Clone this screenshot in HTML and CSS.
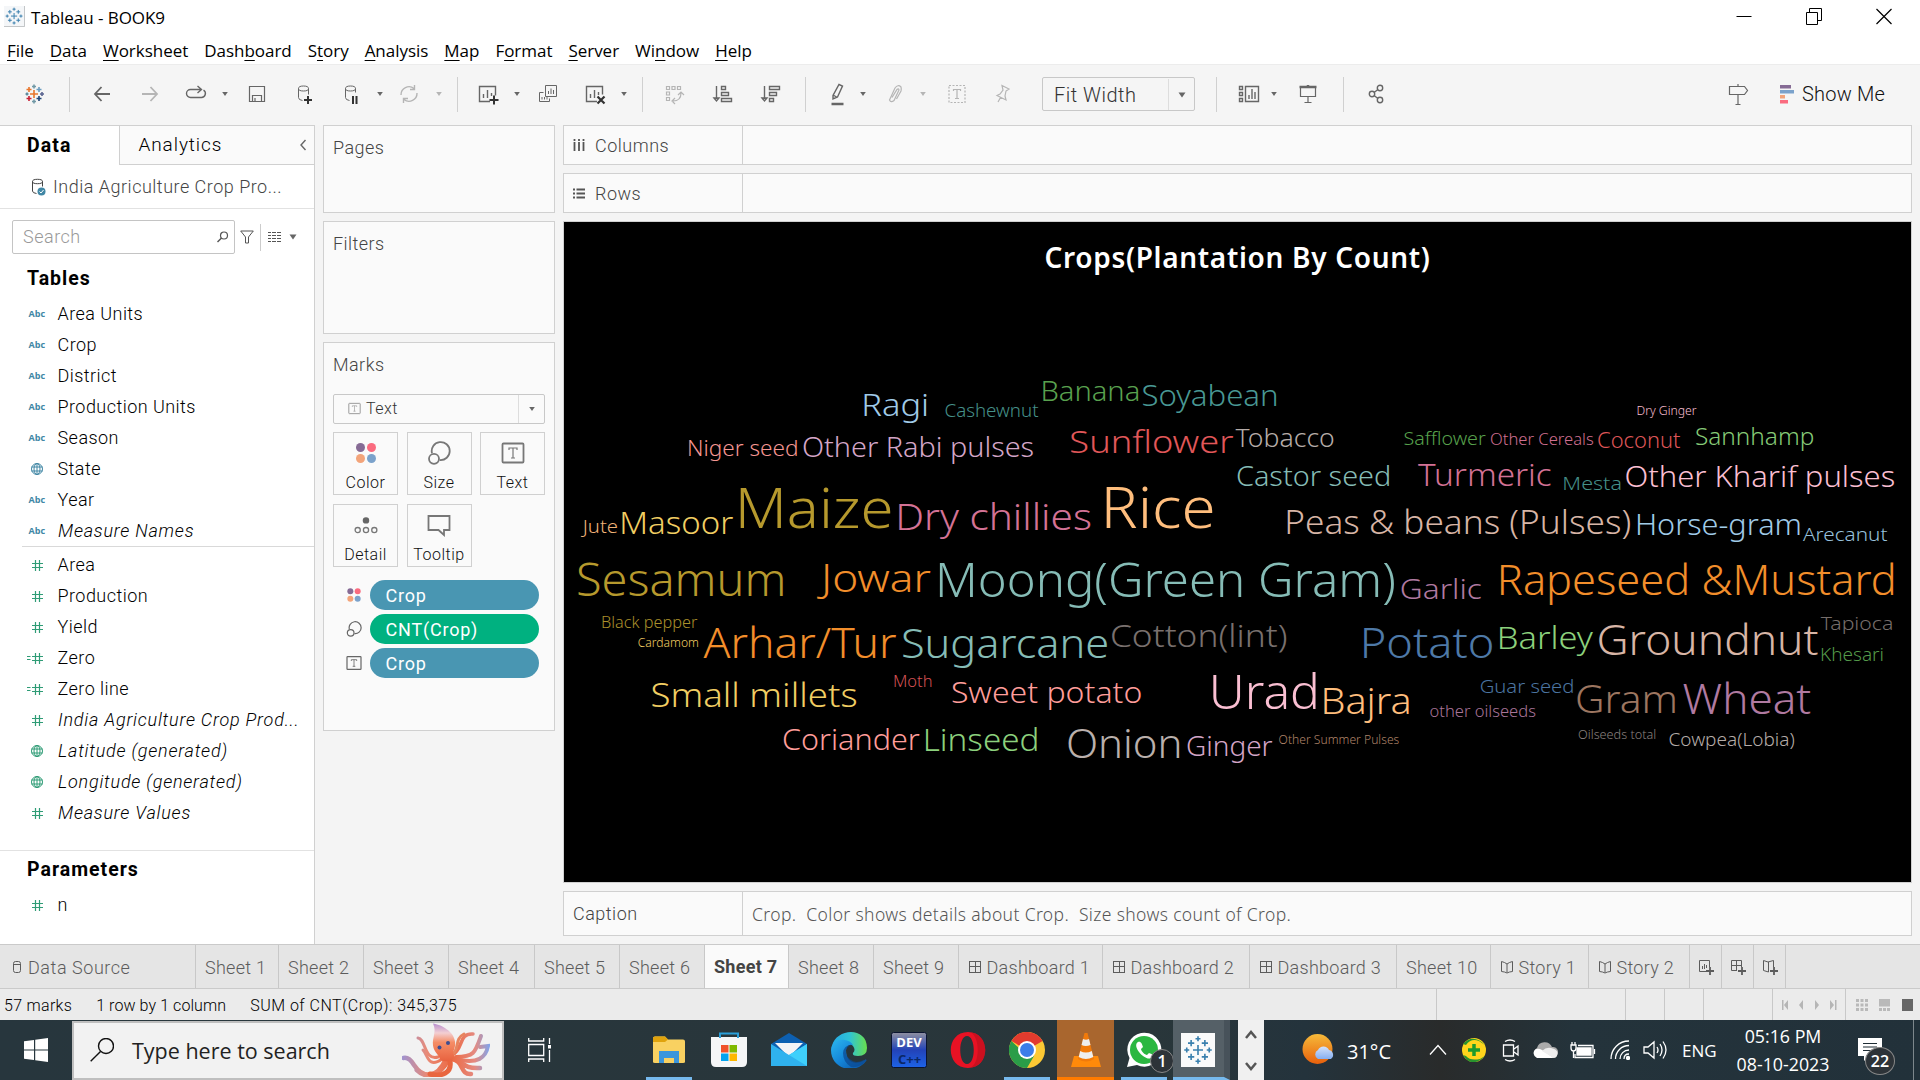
FILE: index.html
```html
<!DOCTYPE html>
<html lang="en">
<head>
<meta charset="utf-8">
<title>Tableau - BOOK9</title>
<link rel="stylesheet" href="styles.css">
</head>
<body>
<svg class="defs" aria-hidden="true">
  <defs>
    <symbol id="caret" viewBox="0 0 8 8"><path d="M1.200 2h5.600L4 6z" fill="currentColor"/></symbol>
    <symbol id="hash" viewBox="0 0 16 16"><path d="M6.500 3v11M10.500 3v11M3 6.500h11M3 10.500h11" class="ln w12"/></symbol>
    <symbol id="calc" viewBox="0 0 20 16"><path d="M10.500 3v11M14.500 3v11M7 6.500h11M7 10.500h11M2 6.500h3.500M2 9.500h3.500" class="ln w12"/></symbol>
    <symbol id="globe" viewBox="0 0 16 16"><path d="M8 2.500v11M2.500 6h11M2.500 10h11" class="ln"/><circle cx="8" cy="8" r="5.500" class="ln"/><ellipse cx="8" cy="8" rx="3" ry="5.500" class="ln"/></symbol>
    <symbol id="tbox" viewBox="0 0 24 24"><rect x="1.500" y="2.500" width="21" height="19" rx="1" class="ln w2"/><path d="M8 9V7h8v2M12 7v10M10 17h4" class="ln w12"/></symbol>
    <symbol id="dots" viewBox="0 0 24 24"><circle cx="6.500" cy="6.500" r="4.500" fill="#866b95"/><circle cx="17.500" cy="6.500" r="4.500" fill="#fa6b7f"/><circle cx="6.500" cy="17.500" r="4.500" fill="#f3a47a"/><circle cx="17.500" cy="17.500" r="4.500" fill="#7ba2cb"/></symbol>
    <symbol id="size" viewBox="0 0 24 24"><path d="M5 12.300A9 9 0 1 1 12.700 19" class="ln w2"/><circle cx="7" cy="17.800" r="5" class="ln w2"/></symbol>
    <symbol id="dash" viewBox="0 0 14 14"><rect x="1.500" y="1.500" width="11" height="11" class="ln"/><path d="M7.500 2v11M2 6.500h11" class="ln"/></symbol>
    <symbol id="story" viewBox="0 0 14 14"><path d="M1.500 1.500 4.500 2.500 7 4l2.500-1.500 3-1v10l-3 .5L7 13l-2.500-1-3-.5zM7 4v8.500" class="ln"/></symbol>
    <symbol id="stars" viewBox="0 0 24 24"><path d="M12 8v8M8 12h8M12 1v4M10 3h4M12 19v4M10 21h4M1 12h4M3 10v4M19 12h4M21 10v4M6.500 4v5M4 6.500h5M17.500 4v5M15 6.500h5M6.500 15v5M4 17.500h5M17.500 15v5M15 17.500h5" stroke="#3a80ae" stroke-width="1.300" fill="none"/></symbol>
    <linearGradient id="edgeA" x1="0" y1="0" x2="1" y2="1"><stop offset="0" stop-color="#2bb5ef"/><stop offset=".5" stop-color="#1485d8"/><stop offset="1" stop-color="#0b4f9e"/></linearGradient>
    <linearGradient id="edgeB" x1="0" y1="0" x2="1" y2="0"><stop offset="0" stop-color="#24a9e6"/><stop offset=".5" stop-color="#2fc3d6"/><stop offset="1" stop-color="#69df4c"/></linearGradient>
    <linearGradient id="devG" x1="0" y1="0" x2="0" y2="1"><stop offset="0" stop-color="#8f90a0"/><stop offset=".5" stop-color="#2343b8"/><stop offset="1" stop-color="#1d63e8"/></linearGradient>
    <linearGradient id="sun" x1="0" y1="0" x2="0" y2="1"><stop offset="0" stop-color="#f6ba3a"/><stop offset="1" stop-color="#e8600c"/></linearGradient>
    <linearGradient id="cloudG" x1="0" y1="0" x2="0" y2="1"><stop offset="0" stop-color="#d5e3fb"/><stop offset="1" stop-color="#86aef0"/></linearGradient>
    <linearGradient id="octo" x1="0" y1="0" x2="0" y2="1"><stop offset="0" stop-color="#b78fd0"/><stop offset=".25" stop-color="#f3cfd2"/><stop offset=".5" stop-color="#f58d66"/><stop offset="1" stop-color="#e8623f"/></linearGradient>
    <linearGradient id="armL" gradientUnits="userSpaceOnUse" x1="0" y1="0" x2="50" y2="0"><stop offset="0" stop-color="#9f93d0"/><stop offset=".5" stop-color="#e98a76"/><stop offset="1" stop-color="#ec6a43"/></linearGradient>
    <linearGradient id="armR" gradientUnits="userSpaceOnUse" x1="50" y1="0" x2="88" y2="0"><stop offset="0" stop-color="#ec6a43"/><stop offset=".6" stop-color="#e58a80"/><stop offset="1" stop-color="#7fa5ee"/></linearGradient>
  </defs>
</svg>

<header class="titlebar">
  <svg class="app-icon" viewBox="0 0 24 24"><rect width="24" height="24" fill="#f4f6f8"/><path d="M23.500 0v23.500H0" stroke="#b9bcbe" fill="none"/><use href="#stars" x="1" y="1" width="21" height="21"/></svg>
  <span class="title">Tableau - BOOK9</span>
  <div class="window-controls">
    <svg viewBox="0 0 16 20"><path d="M.5 10.500h15" class="ln"/></svg>
    <svg viewBox="0 0 16 20"><path d="M.5 6.500h11v12h-11zM3.500 6V2.500h12v12H12" class="ln"/></svg>
    <svg viewBox="0 0 16 20"><path d="m.5 3 15 15M15.500 3l-15 15" class="ln w12"/></svg>
  </div>
</header>

<nav class="menu">
  <span><u>F</u>ile</span><span><u>D</u>ata</span><span><u>W</u>orksheet</span><span>Dash<u>b</u>oard</span><span>S<u>t</u>ory</span><span><u>A</u>nalysis</span><span><u>M</u>ap</span><span>F<u>o</u>rmat</span><span><u>S</u>erver</span><span>Wi<u>n</u>dow</span><span><u>H</u>elp</span>
</nav>

<div class="toolbar">
  <svg class="i" viewBox="0 0 24 24"><g fill="none" stroke-width="1.600"><path d="M12 8v8M8 12h8" stroke="#e8762c"/><path d="M7 5v5M4.500 7.500h5" stroke="#e8762c"/><path d="M17 5v5M14.500 7.500h5" stroke="#6b9dc0"/><path d="M7 14v5M4.500 16.500h5" stroke="#c72035"/><path d="M17 14v5M14.500 16.500h5" stroke="#1f4477"/><path d="M12 2.500v4M10 4.500h4M12 17.500v4M10 19.500h4" stroke="#7199a6"/><path d="M3.500 12h3M5 10.500v3" stroke="#59879b"/><path d="M18 12h4M20 10v4" stroke="#5b6591"/></g></svg>
  <i class="sep"></i>
  <svg class="i" viewBox="0 0 24 24"><path d="M21 12H6M12.500 5 6 12l6.500 7" class="ln w2"/></svg>
  <svg class="i off" viewBox="0 0 24 24"><path d="M4 12h15M12.500 5l6.500 7-6.500 7" class="ln w2"/></svg>
  <svg class="i" viewBox="0 0 24 24"><path d="M13 7.500H6.500a3.500 3.500 0 0 0 0 8h11a4 4 0 0 0 2-7.400M12 7.500h5M13.500 4l4 3.500-4 3.500" class="ln w15"/></svg>
  <svg class="c"><use href="#caret"/></svg>
  <svg class="i" viewBox="0 0 24 24"><path d="M4.500 4.500h15v15h-15zM7.500 19.500v-6h9v6M10 19.500V16" class="ln w12"/></svg>
  <svg class="i" viewBox="0 0 24 24"><path d="M5.500 6.500v9q0 2.500 4 3M15.500 6.500v6" class="ln"/><ellipse cx="10.500" cy="6.500" rx="5" ry="2.500" class="ln"/><path d="M15 14v8M11 18h8" stroke="#333" stroke-width="2"/></svg>
  <svg class="i" viewBox="0 0 24 24"><path d="M6.500 6.500v9q0 2.500 4 3M16.500 6.500v4" class="ln"/><ellipse cx="11.500" cy="6.500" rx="5" ry="2.500" class="ln"/><path d="M14 14v8M17.500 14v8" stroke="#333" stroke-width="2"/></svg>
  <svg class="c"><use href="#caret"/></svg>
  <svg class="i off" viewBox="0 0 24 24"><path d="M4 13A8 8 0 0 1 17 6.500M20 11a8 8 0 0 1-13 6.500M17.500 3v4.500H13M6.500 21v-4.500H11" class="ln w15"/></svg>
  <svg class="c off"><use href="#caret"/></svg>
  <i class="sep"></i>
  <svg class="i" viewBox="0 0 24 24"><path d="M14 19.500H3.500v-15h16v9M7.500 16v-4M11.500 16V8M15.500 14v-3" class="ln w15"/><path d="M18 13.500v9M13.500 18h9" stroke="#333" stroke-width="2"/></svg>
  <svg class="c"><use href="#caret"/></svg>
  <svg class="i" viewBox="0 0 24 24"><path d="M13.500 16.500v3h-10v-9h4M9.500 3.500h11v11h-11zM12.500 12V9M15 12V6.500M17.500 12V8M6 17.500V15M8.500 17.500V15M11 17.500V15" class="ln"/></svg>
  <svg class="i" viewBox="0 0 24 24"><path d="M14 19.500H3.500v-15h16v8M7.500 16v-4M11.500 16V8M15.500 13v-3" class="ln w15"/><path d="m14.500 14.500 7 7M21.500 14.500l-7 7" stroke="#333" stroke-width="2.200"/></svg>
  <svg class="c"><use href="#caret"/></svg>
  <i class="sep"></i>
  <svg class="i off" viewBox="0 0 24 24"><path d="M4.500 4.500h3v3h-3zM10 4.500h3v3h-3zM15.500 4.500h3v3h-3zM4.500 10h3v3h-3zM4.500 15.500h3v3h-3zM11 19q8 0 8-8M13 16l-3 3 3 3M16 13l3-3 3 3" class="ln w12"/></svg>
  <svg class="i" viewBox="0 0 24 24"><path d="M5.500 4v13M3 16l2.500 3L8 16zM10.500 4.500h4v3h-4zM10.500 10.500h7v3h-7zM10.500 16.500h10v3h-10z" class="ln w15"/></svg>
  <svg class="i" viewBox="0 0 24 24"><path d="M5.500 4v13M3 16l2.500 3L8 16zM10.500 4.500h10v3h-10zM10.500 10.500h7v3h-7zM10.500 16.500h4v3h-4z" class="ln w15"/></svg>
  <i class="sep"></i>
  <svg class="i" viewBox="0 0 24 24"><path d="m13 2.500 3.500 1.500-5 11-4.500 2v-3.500zM7 13l4.500 2.500" class="ln w15"/><path d="M5.500 22h12" class="ln w25"/></svg>
  <svg class="c"><use href="#caret"/></svg>
  <svg class="i off" viewBox="0 0 24 24"><path d="m9 15.500 5-8q1.500-1.500 2 .5L11 18.500q-3 2.500-4.500-.5L12 6q3-4 6-1 .5 2 0 4L13.500 17" class="ln w12"/></svg>
  <svg class="c off"><use href="#caret"/></svg>
  <svg class="i off" viewBox="0 0 24 24"><path d="M4 3.500h16v17H4z" class="ln w12 dashed"/><path d="M8.500 9V7.500h7V9M12 7.500v9M10 16.500h4" class="ln w12"/></svg>
  <svg class="i off" viewBox="0 0 24 24"><path d="m11 3.500 7 3.500-3 2-1 5 1 4-9-4.500 3-1.500 3-4zM9.500 15.500 7 20" class="ln w12"/></svg>
  <div class="select fit"><span>Fit Width</span><b><svg class="c big"><use href="#caret"/></svg></b></div>
  <i class="sep"></i>
  <svg class="i" viewBox="0 0 24 24"><path d="M2.500 4.500h3v3h-3zM2.500 10.500h3v3h-3zM2.500 16.500h3v3h-3zM8.500 4.500h13v15h-13zM12 17v-4M15 17V7M18 17v-7" class="ln w15"/></svg>
  <svg class="c"><use href="#caret"/></svg>
  <svg class="i" viewBox="0 0 24 24"><path d="M4.500 6v8.500h15V6M12 15v5M8.500 20.500h7" class="ln w12"/><path d="M3.500 5h17M12 3v2" class="ln w25"/></svg>
  <i class="sep"></i>
  <svg class="i" viewBox="0 0 24 24"><circle cx="8" cy="12" r="2.700" class="ln w15"/><circle cx="16" cy="6" r="2.700" class="ln w15"/><circle cx="16" cy="18" r="2.700" class="ln w15"/><path d="m10 10.500 4-3M10 13.500l4 3" class="ln w15"/></svg>
  <svg class="i" viewBox="0 0 24 24"><path d="M3.500 4.500h15l3 4-3 4h-15zM12 2v2M12 13v9M9.500 22.500h5" class="ln w12"/></svg>
  <div class="showme"><svg viewBox="0 0 14 20"><path fill="#866b95" d="M0 1h11v3.500H0z"/><path fill="#7ba2cb" d="M0 6h14v3.500H0z"/><path fill="#f3a47a" d="M0 11h5v3.500H0z"/><path fill="#fa6b7f" d="M0 16h8v3.500H0z"/></svg><span>Show Me</span></div>
</div>

<main class="workspace">
  <aside class="data-pane">
    <div class="pane-tabs"><b>Data</b><div><span>Analytics</span><svg viewBox="0 0 8 12"><path d="M6.500 1 2 6l4.500 5" class="ln w15"/></svg></div></div>
    <div class="source"><svg viewBox="0 0 16 18"><path d="M1.500 3.500V13q0 2 4 2.500M11.500 3.500v5" class="ln"/><ellipse cx="6.500" cy="3.500" rx="5" ry="2.200" class="ln"/><circle cx="10.500" cy="13.500" r="4" fill="#4187a5"/><path d="m8.500 13.500 1.500 1.500 2.500-3" stroke="#fff" fill="none"/></svg><span>India Agriculture Crop Pro...</span></div>
    <div class="search-row">
      <div class="search"><span>Search</span><svg viewBox="0 0 12 12"><circle cx="7" cy="4.500" r="3.500" class="ln w12"/><path d="m4.500 7-4 4" class="ln w15"/></svg></div>
      <svg class="funnel" viewBox="0 0 14 14"><path d="M.7 1h12.600L8.500 7v6h-3V7z" class="ln"/></svg>
      <i></i>
      <svg class="listview" viewBox="0 0 13 11"><path d="M0 .5h3M4 .5h4M9 .5h4M0 3.500h3M4 3.500h4M9 3.500h4M0 6.500h3M4 6.500h4M9 6.500h4M0 9.500h3M4 9.500h4M9 9.500h4" class="ln w12"/></svg>
      <svg class="c big"><use href="#caret"/></svg>
    </div>
    <h2>Tables</h2>
    <ul class="fields dims">
      <li><em>Abc</em>Area Units</li>
      <li><em>Abc</em>Crop</li>
      <li><em>Abc</em>District</li>
      <li><em>Abc</em>Production Units</li>
      <li><em>Abc</em>Season</li>
      <li><em><svg><use href="#globe"/></svg></em>State</li>
      <li><em>Abc</em>Year</li>
      <li class="gen"><em>Abc</em>Measure Names</li>
    </ul>
    <ul class="fields measures">
      <li><em><svg><use href="#hash"/></svg></em>Area</li>
      <li><em><svg><use href="#hash"/></svg></em>Production</li>
      <li><em><svg><use href="#hash"/></svg></em>Yield</li>
      <li><em><svg class="wide"><use href="#calc"/></svg></em>Zero</li>
      <li><em><svg class="wide"><use href="#calc"/></svg></em>Zero line</li>
      <li class="gen"><em><svg><use href="#hash"/></svg></em>India Agriculture Crop Prod...</li>
      <li class="gen"><em><svg><use href="#globe"/></svg></em>Latitude (generated)</li>
      <li class="gen"><em><svg><use href="#globe"/></svg></em>Longitude (generated)</li>
      <li class="gen"><em><svg><use href="#hash"/></svg></em>Measure Values</li>
    </ul>
    <section class="params">
      <h2>Parameters</h2>
      <ul class="fields"><li><em><svg><use href="#hash"/></svg></em>n</li></ul>
    </section>
  </aside>

  <div class="cards">
    <section class="card pages">Pages</section>
    <section class="card filters">Filters</section>
    <section class="card marks">
      <span>Marks</span>
      <div class="select mark-type"><svg class="t"><use href="#tbox"/></svg><span>Text</span><b><svg class="c"><use href="#caret"/></svg></b></div>
      <div class="buttons">
        <div><svg><use href="#dots"/></svg>Color</div>
        <div><svg><use href="#size"/></svg>Size</div>
        <div><svg><use href="#tbox"/></svg>Text</div>
        <div><svg viewBox="0 0 26 24"><circle cx="13" cy="7" r="3.500" fill="#666"/><circle cx="4" cy="17.500" r="2.800" class="ln w15"/><circle cx="13" cy="17.500" r="2.800" class="ln w15"/><circle cx="22" cy="17.500" r="2.800" class="ln w15"/></svg>Detail</div>
        <div><svg viewBox="0 0 24 24"><path d="M1.500 3h21v14H17v5l-5.500-5h-10z" class="ln w2"/></svg>Tooltip</div>
      </div>
      <div class="pills">
        <div><svg><use href="#dots"/></svg><span>Crop</span></div>
        <div class="green"><svg><use href="#size"/></svg><span>CNT(Crop)</span></div>
        <div><svg><use href="#tbox"/></svg><span>Crop</span></div>
      </div>
    </section>
  </div>

  <div class="view">
    <div class="shelf"><div><svg viewBox="0 0 12 14"><path d="M1.500 0v2M6 0v2M10.500 0v2M1.500 3v9M6 3v9M10.500 3v9" class="ln w2"/></svg>Columns</div></div>
    <div class="shelf"><div><svg viewBox="0 0 12 14"><path d="M0 2.500h2M0 6.500h2M0 10.500h2M3.500 2.500H12M3.500 6.500H12M3.500 10.500H12" class="ln w2"/></svg>Rows</div></div>
    <div class="canvas"><h1>Crops(Plantation By Count)</h1><svg id="cloud" viewBox="564 222 1347 660"></svg></div>
    <div class="shelf caption"><div>Caption</div><p>Crop.&nbsp; Color shows details about Crop.&nbsp; Size shows count of Crop.</p></div>
  </div>
</main>

<nav class="sheets">
  <div><svg viewBox="0 0 10 14"><rect x="1.500" y="1.500" width="7" height="11" rx="2" class="ln"/><path d="M2 4.500h6" class="ln"/></svg>Data Source</div>
  <div>Sheet 1</div><div>Sheet 2</div><div>Sheet 3</div><div>Sheet 4</div><div>Sheet 5</div><div>Sheet 6</div>
  <div class="active">Sheet 7</div><div>Sheet 8</div><div>Sheet 9</div>
  <div><svg><use href="#dash"/></svg>Dashboard 1</div><div><svg><use href="#dash"/></svg>Dashboard 2</div><div><svg><use href="#dash"/></svg>Dashboard 3</div>
  <div>Sheet 10</div>
  <div><svg><use href="#story"/></svg>Story 1</div><div><svg><use href="#story"/></svg>Story 2</div>
  <div class="new"><svg viewBox="0 0 16 16"><path d="M9 12.500H1.500v-11h10V8M4.500 10V7M6.500 10V5M8.500 9V6" class="ln"/><path d="M12 8v8M8 12h8" class="ln w2"/></svg></div>
  <div class="new"><svg viewBox="0 0 16 16"><path d="M7 11.500H1.500v-10h10V8M6.500 2v9M2 6.500h9" class="ln"/><path d="M12 8v8M8 12h8" class="ln w2"/></svg></div>
  <div class="new"><svg viewBox="0 0 16 16"><path d="M1.500 1.500 6 3l5.500-1.500V8M1.500 1.500v10L6.500 13V3" class="ln"/><path d="M12 8v8M8 12h8" class="ln w2"/></svg></div>
</nav>

<div class="status">
  <span>57 marks</span><span class="dims-count">1 row by 1 column</span><span class="sum">SUM of CNT(Crop): 345,375</span>
  <div class="cells"><i></i><i></i><i></i><i></i>
    <i><svg viewBox="0 0 56 12"><path fill="#b5b5b5" d="M0 1h1.500v10H0zM6 1v10L2 6zM21 1v10l-4-5zM33 1v10l4-5zM48 1v10l4-5zM53 1h1.500v10H53z"/></svg></i>
    <i><svg viewBox="0 0 58 12"><path fill="#b9b9b9" d="M0 0h3v3H0zM4.500 0h3v3h-3zM9 0h3v3H9zM0 4.500h3v3H0zM4.500 4.500h3v3h-3zM9 4.500h3v3H9zM0 9h3v3H0zM4.500 9h3v3h-3zM9 9h3v3H9zM23 0h11v7.500H23zM23 9h3v3h-3zM27 9h3v3h-3zM31 9h3v3h-3z"/><path fill="#666" d="M46 0h11v12H46z"/></svg></i></div>
</div>

<footer class="taskbar">
  <div class="start"><svg viewBox="0 0 24 24"><path fill="#fff" d="M0 3.300 10 2v9.500H0zM11.200 1.800 24 0v11.500H11.200zM0 12.500h10V22L0 20.700zM11.200 12.500H24V24l-12.800-1.800z"/></svg></div>
  <div class="find"><svg class="lens" viewBox="0 0 24 24"><circle cx="16" cy="8" r="7.500" class="ln w15"/><path d="M10.500 13.500.7 23.300" class="ln w15"/></svg><span>Type here to search</span>
    <svg class="octopus" viewBox="0 0 88 54"><g fill="none" stroke-linecap="round">
      <g stroke="url(#armL)"><path d="M36 34C22 38 24 16 16 15" stroke-width="3"/><path d="M40 36C26 46 26 32 21 27" stroke-width="3"/><path d="M44 36C34 58 20 54 12 42 9 37 6 34 1.500 35" stroke-width="4.500"/><path d="M46 37C38 53 24 56 15 47" stroke-width="5"/></g>
      <g stroke="url(#armR)"><path d="M50 32C62 26 56 10 71 11" stroke-width="3.500"/><path d="M54 34C72 34 73 30 79 13" stroke-width="4"/><path d="M54 36C76 42 84 34 86 23L78 24" stroke-width="4"/><path d="M50 36C62 38 58 52 69 51M50 35C62 38 60 46 78 45" stroke-width="4.500"/></g>
      <path d="M50 32C58 26 52 16 62 11" stroke="#e7855f" stroke-width="3"/><path d="M48 38C50 50 40 54 28 51" stroke="#e9663f" stroke-width="5"/></g>
      <path d="M31 .5c8 1 21 8 22 18 1 7-3 9-1 14 1 5-9 8-14 4-1-5-6-7-7-14-1-8 4-14 0-22z" fill="url(#octo)"/><circle cx="37.500" cy="24.500" r="2" fill="#3e4d91"/><circle cx="46" cy="20" r="2" fill="#3e4d91"/></svg>
  </div>
  <svg class="taskview" viewBox="0 0 24 24"><path d="M.7 0v3h15V0M.7 24v-3h15v3M.7 6.500h15v11H.7zM21.500 0v6M21.500 12v12" stroke="#fff" stroke-width="1.300" fill="none"/><path d="M20 7h3v3.500h-3z" fill="#fff"/></svg>
  <div class="apps">
    <div class="run"><svg viewBox="0 0 36 36"><path d="M2 6q0-1.500 2-1.500h10l3 3h15q2 0 2 2V30q0 1-2 1H4q-2 0-2-1z" fill="#f9d161"/><path d="M2 6q0-1.500 2-1.500h10l3 3-3 2.500H2z" fill="#e0a30d"/><path d="M8 19h20v12h-5v-5H13v5H8z" fill="#3b96dc"/></svg></div>
    <div><svg viewBox="0 0 36 36"><path d="M0 5h36v25q0 5-5 5H5q-5 0-5-5z" fill="#f5f6f7"/><path d="M9 6V1.500h18V6" stroke="#2b9fd9" stroke-width="2" fill="none"/><path fill="#f0522a" d="M10 13h7.500v7.500H10z"/><path fill="#7fb900" d="M18.500 13H26v7.500h-7.500z"/><path fill="#03a3ee" d="M10 21.500h7.500V29H10z"/><path fill="#feb800" d="M18.500 21.500H26V29h-7.500z"/></svg></div>
    <div><svg viewBox="0 0 36 36"><path d="m0 12 18-11 18 11v22H0z" fill="#0d60b1"/><path d="M4 11h28L18 25z" fill="#f4f4f6"/><path d="m0 12 18 11L36 12v22H0z" fill="#2fb2ee"/><path d="m18 23 18-11v22z" fill="#3fd0fb"/></svg></div>
    <div><svg viewBox="0 0 36 36"><path d="M1 14C5-4 36-6 36 16q0 8-9 8-6 0-5-3 3-3 0-7-8-8-21 0z" fill="url(#edgeB)"/><path d="M0 18C0 10 8 7 14 8q6 1 8 5-6-1-7 5 0 12 10 13 5 0 9-3c1-1 2 0 1 1-10 14-35 9-35-11z" fill="url(#edgeA)"/><path d="M22 13q-9-1-10 8 0 9 8 14 9 1 15-6 0-2-2-1-8 4-13 0-6-4-5-10 2-5 7-5z" fill="#0b4b94" opacity=".75"/></svg></div>
    <div><svg viewBox="0 0 36 36"><rect x=".5" y=".5" width="35" height="35" rx="2" fill="url(#devG)" stroke="#0a1430"/><text x="18" y="15" class="dev">DEV</text><text x="18.500" y="32" class="cpp">C++</text></svg></div>
    <div><svg viewBox="0 0 36 36"><path fill-rule="evenodd" fill="#e81224" d="M18 0c23 0 23 36 0 36S-5 0 18 0zm-1 4c-9 0-9 28 0 28s9-28 0-28z"/><path d="M21 .5c19 3 19 32 0 35 9-5 9-30 0-35z" fill="#b80f1d" opacity=".6"/></svg></div>
    <div class="run"><svg viewBox="0 0 36 36"><circle cx="18" cy="18" r="18" fill="#fcc934"/><path d="M18 18 2.400 9A18 18 0 0 1 33.600 9z" fill="#e23b2e"/><path d="M18 18h-6L2.400 9A18 18 0 0 0 18 36l7-12z" fill="#2a9d48"/><circle cx="18" cy="18" r="9" fill="#fff"/><circle cx="18" cy="18" r="7" fill="#3b7de9"/></svg></div>
    <div class="run vlc"><svg viewBox="0 0 36 36"><path d="M6 24h24l3 11H3z" fill="#ff8a0a"/><path d="m16.500 1 3 0L26 27q-8 5-16 0z" fill="#f17a0a"/><path d="m15 7-1.500 6q4 2 9 0L21 7q-3 1.500-6 0zM12.200 19l-1.500 6q7 4 14.600 0l-1.500-6q-6 3-11.600 0z" fill="#eee"/></svg></div>
    <div class="run"><svg viewBox="0 0 36 36"><path d="M1 35 3.500 26A17 17 0 1 1 11 33z" fill="#fff"/><circle cx="18" cy="18" r="14" fill="#2bb741"/><path d="M12 10c-3 2-2 6 1 10s9 8 12 6c3-3 1-4-2-5l-2 2c-2 0-6-4-6-6l2-2c-1-3-2-6-5-5z" fill="#fff"/></svg><span class="badge">1</span></div>
    <div class="run tab"><svg viewBox="0 0 36 36"><path d="M1 1h34v34H1z" fill="#fafafa"/><use href="#stars" x="3" y="3" width="30" height="30"/></svg></div>
  </div>
  <div class="scroll"><svg viewBox="0 0 26 60"><path d="m8 18 5-6 5 6M8 43l5 6 5-6" class="ln w25"/></svg></div>
  <div class="tray">
    <svg class="weather" viewBox="0 0 34 32"><circle cx="15.500" cy="15" r="15" fill="url(#sun)"/><path d="M16 25a5 5 0 0 1 0-9 6 6 0 0 1 11 0 5 5 0 0 1 2 9z" fill="url(#cloudG)"/></svg>
    <span class="temp">31°C</span>
    <svg class="up" viewBox="0 0 18 12"><path d="m1 10.500 8-9 8 9"/></svg>
    <svg class="plus" viewBox="0 0 24 24"><circle cx="12" cy="12" r="12" fill="#ffd51c"/><path d="M1 6q10-11 22 1L17 3Q9 0 4 7zM1 17q9 14 22 1l-5 3Q8 23 4 18z" fill="#27932e"/><path d="M12 6v12M6 12h12" stroke="#1d9a2d" stroke-width="3.500"/></svg>
    <svg class="cam" viewBox="0 0 18 24"><path d="M1.500 7h10v11h-10zM12 11l4-3v9l-4-3M3 3.500q5-3 10 0M3 21.500q5 3 10 0"/></svg>
    <svg class="cloud" viewBox="0 0 26 18"><path d="M5 16A5 5 0 0 1 5 7a8 8 0 0 1 15-1 5 5 0 0 1 2 10z" fill="#aaa"/><path d="M5 17a5 5 0 0 1-1-9q3-1 6 1l12 8z" fill="#fff"/><path d="M10 10q4-4 9-3 6 1 6.500 5 0 5-4 5z" fill="#eee"/></svg>
    <svg class="bat" viewBox="0 0 26 18"><path d="M8 4.500h15v12H5V13"/><path d="M7 7h14v7H7z" fill="#fff"/><path d="M24.500 8v5M3.500 10v7M1 4v3q0 3 2.500 3T6 7V4zM2 4V1M5 4V1"/></svg>
    <svg class="wifi" viewBox="0 0 20 20"><path d="M1 19C1 9 9 1 19 1M5.500 19C5.500 11.500 11.500 5.500 19 5.500M10 19c0-5 4-9 9-9M14 19q0-5 5-5"/><circle cx="18" cy="18" r="1.500" fill="#fff"/></svg>
    <svg class="vol" viewBox="0 0 24 20"><path d="M1 7h4l6-5v16l-6-5H1zM14 7q2 3 0 6M17 4q4 6 0 12M20 1.500q6 8.500 0 17"/></svg>
    <span class="lang">ENG</span>
    <div class="clock"><span>05:16 PM</span><span>08-10-2023</span></div>
    <div class="note"><svg viewBox="0 0 24 24"><path d="M0 0h24v18H11l-5 5v-5H0z" fill="#fff"/><path d="M5 5.500h14M5 9h14M5 12.500h9" stroke="#1f2d35"/></svg><span class="badge big">22</span></div>
    <i class="edge"></i>
  </div>
</footer>
<script src="cloud.js"></script>
</body>
</html>
```

FILE: styles.css
```css
* { box-sizing: border-box; }
body {
  margin: 0; width: 1920px; height: 1080px; overflow: hidden;
  display: grid; grid-template-rows: 32px 32px 61px 819px 45px 31px 60px;
  background: #f4f4f4; color: #222;
  font: 300 18px/1.2 Roboto, sans-serif; letter-spacing: .35px;
}
.defs { position: absolute; width: 0; height: 0; }
.ln { fill: none; stroke: currentColor; stroke-width: 1; }
.w12 { stroke-width: 1.200; }
.w15 { stroke-width: 1.400; }
.w2 { stroke-width: 1.800; }
.w25 { stroke-width: 2.500; }
.dashed { stroke-dasharray: 2 1.500; }
svg { display: block; flex: none; }
h1, h2, ul, p { margin: 0; padding: 0; }

.titlebar, .menu { background: #fff; color: #000; font: 400 17px/1 "Open Sans", sans-serif; letter-spacing: 0; display: flex; align-items: center; }
.titlebar { padding-left: 4px; gap: 6px; }
.app-icon { width: 21px; height: 21px; }
.titlebar .title { padding-top: 3px; font-size: 17px; letter-spacing: -.05px; }
.window-controls { margin-left: auto; display: flex; gap: 54px; padding-right: 28.500px; }
.window-controls svg { width: 16px; height: 20px; }
.menu { padding: 4px 0 0 7px; gap: 16px; letter-spacing: -.03px; }
.menu u { text-underline-offset: 3px; text-decoration-thickness: 1px; }

.toolbar {
  border-top: 1px solid #ececec; background: #f5f5f5; color: #666; padding: 0 0 2px 22px;
  display: grid; align-items: center; justify-items: start;
  grid-template-columns: 47px 20px 49px 46px 37px 24px 48px 46px 37px 21px 38px 22px 19px 37px 23px 47px 37px 22px 20px 49px 48px 46px 21px 33px 24px 36px 26px 46px 51px 174px 21px 33px 26px 47px 21px 362px 54px 1fr;
}
.toolbar .i { width: 24px; height: 24px; }
.c { width: 8px; height: 8px; color: #666; }
.c.big { width: 10px; height: 10px; }
.toolbar .off { color: #b5b5b5; }
.sep { width: 1px; height: 35px; background: #d0d0d0; }
.select { border: 1px solid #c8c8c8; border-radius: 2px; display: flex; align-items: center; color: #333; }
.select b { margin-left: auto; align-self: stretch; border-left: 1px solid #ddd; display: grid; place-items: center; }
.fit { width: 153px; height: 34px; padding: 1px 0 0 11px; font-size: 20px; letter-spacing: .5px; }
.fit b { width: 26px; }
.showme { display: flex; gap: 8px; align-items: center; font-size: 20px; color: #111; letter-spacing: .2px; }
.showme svg { width: 14px; height: 20px; }

.workspace { display: grid; grid-template-columns: 315px 232px 1349px; column-gap: 8px; }
.data-pane { background: #fff; border: solid #d0d0d0; border-width: 1px 1px 0 0; color: #000; display: flex; flex-direction: column; }
.pane-tabs { height: 39px; display: flex; font-size: 19px; flex: none; }
.pane-tabs b { width: 119px; padding: 8px 0 0 27px; font-weight: 700; font-size: 19.500px; letter-spacing: 1.100px; }
.pane-tabs div { flex: 1; background: #fafafa; border: solid #d0d0d0; border-width: 0 0 1px 1px; display: flex; justify-content: space-between; padding: 8px 7px 0 18.500px; letter-spacing: .9px; }
.pane-tabs svg { width: 8px; height: 12px; margin-top: 5px; color: #666; }
.source { height: 44px; flex: none; border-bottom: 1px solid #e2e2e2; display: flex; align-items: center; gap: 6px; padding-left: 31px; color: #444; font-size: 18px; letter-spacing: .5px; }
.source svg { width: 16px; height: 18px; }
.search-row { display: flex; align-items: center; margin-top: 11px; padding-left: 12px; color: #555; flex: none; }
.search { width: 223px; height: 34px; border: 1px solid #c4c4c4; border-radius: 2px; display: flex; align-items: center; justify-content: space-between; padding: 0 5px 0 10px; color: #999; letter-spacing: .5px; }
.search svg { width: 12px; height: 12px; color: #555; }
.funnel { width: 14px; height: 14px; margin-left: 5px; }
.search-row i { width: 1px; height: 27px; background: #ccc; margin: 0 7px 0 6px; }
.listview { width: 13px; height: 11px; margin-right: 7px; }
h2 { font-size: 19.500px; line-height: 22px; font-weight: 700; letter-spacing: 1px; padding-left: 27px; }
.search-row + h2 { margin: 14px 0 8px; }
.fields { list-style: none; }
.fields li { height: 31px; display: flex; align-items: center; letter-spacing: .45px; }
.fields em { width: 57.500px; flex: none; padding-left: 28.500px; font: 700 9px/1 "Open Sans", sans-serif; letter-spacing: 0; color: #4187a5; }
.fields em svg { width: 16px; height: 16px; }
.fields em svg.wide { width: 20px; margin-left: -4px; }
.fields .gen { font-style: italic; letter-spacing: .78px; }
.fields .gen em { width: 58px; font-style: normal; }
.measures em, .params em { color: #2f9c76; }
.measures { padding-top: 2px; }
.dims { border-bottom: 1px solid #d9d9d9; margin-left: 22px; }
.dims li { margin-left: -22px; }
.params { margin-top: 22px; border-top: 1px solid #e2e2e2; padding-top: 8px; }
.params .fields { margin-top: 8px; }

.cards { display: flex; flex-direction: column; gap: 8px; }
.card { background: #fafafa; border: 1px solid #d0d0d0; padding: 11px 9px; color: #444; font-size: 18px; letter-spacing: .45px; }
.pages { height: 88px; } .filters { height: 113px; } .marks { height: 389px; }
.mark-type { height: 30px; margin-top: 18px; font-size: 16px; padding-left: 14px; gap: 5px; }
.mark-type b { width: 26px; }
.mark-type .t { width: 13px; height: 13px; color: #999; }
.buttons { display: grid; grid-template-columns: 65px 65px 65px; gap: 9px 8.500px; margin-top: 8px; font-size: 16px; color: #111; }
.buttons div { height: 63px; border: 1px solid #d0d0d0; display: flex; flex-direction: column; align-items: center; justify-content: space-between; padding: 8px 0 1px; letter-spacing: .5px; }
.buttons svg { width: 24px; height: 24px; color: #777; }
.pills { margin-top: 13px; display: flex; flex-direction: column; gap: 4px; }
.pills div { height: 30px; display: flex; align-items: center; padding-left: 13px; gap: 8px; color: #666; }
.pills svg { width: 16px; height: 16px; }
.pills span { width: 169px; height: 30px; border-radius: 15px; background: #4996b2; color: #fff; padding: 5px 0 0 15.500px; font-weight: 400; letter-spacing: .8px; }
.pills .green span { background: #00b180; }

.view { display: grid; grid-template-rows: 40px 40px 662px 45px; row-gap: 8px; }
.shelf { background: #fafafa; border: 1px solid #d0d0d0; display: flex; align-items: center; color: #444; }
.shelf div { width: 179px; align-self: stretch; border-right: 1px solid #d0d0d0; display: flex; align-items: center; gap: 10px; padding: 1px 0 0 9px; letter-spacing: .5px; }
.shelf svg { width: 12px; height: 14px; color: #555; }
.shelf p { padding: 1px 0 0 9px; font: 300 17.500px/1.2 "Noto Sans", sans-serif; letter-spacing: .37px; color: #555; }
.canvas { background: #000; border: 1px solid #d0d0d0; position: relative; }
.canvas h1 { color: #fff; font: 600 28px/38px "Noto Sans", sans-serif; letter-spacing: .68px; text-align: center; padding-top: 16px; }
#cloud { position: absolute; left: 0; top: 0; width: 1347px; height: 660px; font-family: "Noto Sans", sans-serif; font-weight: 300; letter-spacing: 0; }

.sheets { background: #e5e5e5; border: solid #cacaca; border-width: 1px 0; color: #5c5c5c; display: grid; grid-template-columns: 196px 83px 85px 85px 86px 85px 85px 84px 85px 85px 144px 147px 147px 94px 98px 101px 32px 32px 32px; letter-spacing: .28px; }
.sheets div { border-right: 1px solid #c8c8c8; display: flex; align-items: center; padding: 2px 0 0 9px; gap: 4.500px; white-space: nowrap; }
.sheets div:first-child { padding-left: 12px; gap: 6px; letter-spacing: .55px; }
.sheets svg { width: 14px; height: 14px; margin-top: -1px; }
.sheets div:first-child svg { width: 10px; }
.sheets .active { background: #fafafa; color: #444; font-weight: 700; padding-top: 1px; }
.sheets .new { padding-left: 8px; }
.sheets .new svg { width: 16px; height: 16px; }

.status { background: #ebebeb; color: #000; font-size: 16px; display: flex; align-items: center; padding: 0 0 0 4px; gap: 24px; white-space: nowrap; letter-spacing: .3px; }
.status span { padding-top: 2px; }
.status .dims-count { letter-spacing: .08px; }
.status .sum { letter-spacing: .5px; }
.cells { margin-left: auto; align-self: stretch; display: grid; grid-template-columns: 189px 39px 39px 69px 73px 75px; }
.cells i { border-left: 1px solid #c8c8c8; display: flex; align-items: center; padding-left: 9px; }
.cells i:last-child { padding-left: 10px; }
.cells i:last-child svg { width: 58px; height: 12px; }
.cells svg { width: 56px; height: 12px; }

.taskbar { color: #fff; display: flex; align-items: center; font: 400 17.800px/1 "Open Sans", sans-serif; letter-spacing: 0; background: linear-gradient(90deg, #27363d, #29363a 60%, #24333c 68%, #292b2b 75%, #24333b 82%, #22313a); }
.start { width: 72px; display: grid; place-items: center; }
.start svg { width: 24px; height: 24px; }
.find { width: 432px; height: 59px; background: #f2f2f2; border: 2px solid #bfbfbf; color: #222; display: flex; align-items: center; padding: 0 12px 0 16px; font-size: 21.500px; }
.find span { padding-top: 2px; }
.lens { width: 24px; height: 24px; margin-right: 18px; color: #111; }
.octopus { width: 88px; height: 54px; margin-left: auto; }
.taskview { width: 24px; height: 24px; margin: 0 85px 0 24px; }
.apps { display: grid; grid-template-columns: 60px 60px 60px 60px 59px 59px 59px 59px 58px 56px; align-self: stretch; margin-left: 2px; }
.apps div { position: relative; display: grid; place-items: center; justify-self: center; width: 46px; height: 60px; }
.apps svg { width: 36px; height: 36px; }
.apps .run { border-bottom: 3px solid #76b9ed; padding-top: 3px; }
.apps .vlc { background: #a9662e; width: 57px; border-color: #ff7b00; }
.apps .tab { background: #556067; border-right: 6px solid #47525a; width: 57px; }
.dev { font: 700 13px "Open Sans", sans-serif; fill: #fff; text-anchor: middle; }
.cpp { font: 700 13px "Open Sans", sans-serif; fill: #0b2766; text-anchor: middle; }
.badge { position: absolute; right: -7px; top: 29px; width: 24px; height: 24px; border: 1px solid #888; border-radius: 50%; background: #2d3338; color: #fff; display: grid; place-items: center; font-size: 16px; font-weight: 600; }
.scroll { width: 26px; height: 60px; background: #f0f0f0; color: #555; margin-left: 9px; }
.scroll svg { width: 26px; height: 60px; }
.tray { flex: 1; display: flex; align-items: center; padding-left: 38px; }
.up, .cam, .bat, .wifi, .vol { fill: none; stroke: #fff; stroke-width: 1.300; }
.weather { width: 34px; height: 32px; }
.temp { font-size: 20px; margin: 4px 0 0 11px; width: 82px; }
.up { width: 18px; height: 12px; }
.plus { width: 24px; height: 24px; margin-left: 15px; }
.cam { width: 18px; height: 24px; margin-left: 16px; }
.cloud { width: 26px; height: 18px; margin-left: 12px; }
.bat { width: 26px; height: 18px; margin-left: 12px; }
.wifi { width: 20px; height: 20px; margin-left: 14px; }
.vol { width: 24px; height: 20px; margin-left: 13px; }
.lang { margin: 1px 0 0 15px; width: 36px; font-size: 17px; }
.clock { width: 130px; display: flex; flex-direction: column; align-items: center; gap: 10px; margin-top: 1px; }
.note { position: relative; margin-left: 10px; }
.note svg { width: 24px; height: 24px; }
.badge.big { width: 30px; height: 28px; right: -13px; top: 9px; }
.edge { width: 1px; height: 60px; background: #7d878c; margin: 0 6px 0 auto; }
```

FILE: cloud.js
```js
// [label, left edge, right edge, baseline, font size, colour]
const words = [
  ["Ragi", 864.5, 926.5, 416, 32, "#a0cbe8"],
  ["Cashewnut", 945.5, 1038.5, 417, 18, "#459089"],
  ["Banana", 1042.5, 1138.500, 401, 27.5, "#59a14f"],
  ["Soyabean", 1142.5, 1276.500, 406, 28.5, "#499894"],
  ["Dry Ginger", 1637.5, 1697, 415, 12, "#fabfd2"],
  ["Niger seed", 689, 797.5, 456.3, 22, "#f59692"],
  ["Other Rabi pulses", 803, 1033.5, 457, 27, "#d4a6c8"],
  ["Sunflower", 1070.500, 1234, 453, 32, "#e15759"],
  ["Tobacco", 1235.5, 1334, 447.3, 25, "#b5aca8"],
  ["Safflower", 1404.500, 1486.5, 445.3, 18.5, "#57a04c"],
  ["Other Cereals", 1491, 1593, 445.3, 16.5, "#d06f91"],
  ["Coconut", 1598, 1680, 447.5, 22, "#dd5557"],
  ["Sannhamp", 1696, 1813.5, 445.3, 23, "#86ca77"],
  ["Castor seed", 1237, 1389, 486, 27, "#86bcb6"],
  ["Turmeric", 1418, 1551.5, 486, 32, "#d37295"],
  ["Mesta", 1563.5, 1620.7, 490, 19, "#459089"],
  ["Other Kharif pulses", 1625.500, 1895, 487, 28.5, "#fabfd2"],
  ["Jute", 580.500, 617, 533.3, 18, "#f0b277"],
  ["Masoor", 622.500, 733, 534, 31, "#f1ce63"],
  ["Maize", 740, 890.5, 527.5, 56, "#b6992d"],
  ["Dry chillies", 898.500, 1090.500, 530.3, 37, "#d37295"],
  ["Rice", 1106, 1213, 527.5, 57, "#ffbe7d"],
  ["Peas & beans (Pulses)", 1287.500, 1630, 534, 33, "#d7b5a6"],
  ["Horse-gram", 1637, 1800, 535, 29, "#a0cbe8"],
  ["Arecanut", 1803, 1887, 541, 19, "#97c0dc"],
  ["Sesamum", 578, 783, 595.5, 45, "#b6992d"],
  ["Jowar", 816.5, 930.5, 591.5, 39, "#f28e2b"],
  ["Moong(Green Gram)", 939, 1394.5, 596.5, 48, "#86bcb6"],
  ["Garlic", 1401, 1481.5, 599, 28, "#b07aa1"],
  ["Rapeseed &Mustard", 1501, 1893.5, 594.5, 42, "#f28e2b"],
  ["Black pepper", 602, 698, 628, 16.5, "#ab902b"],
  ["Cardamom", 637.7, 698, 647.3, 12.3, "#f1ce63"],
  ["Arhar/Tur", 703.500, 896, 657.5, 42, "#f28e2b"],
  ["Sugarcane", 903, 1107.5, 658, 41, "#86bcb6"],
  ["Cotton(lint)", 1111, 1286.5, 647.3, 32, "#79706e"],
  ["Potato", 1364, 1492.5, 658, 42, "#4e79a7"],
  ["Barley", 1500, 1593.5, 649, 31, "#8cd17d"],
  ["Groundnut", 1598.6, 1818, 655, 43, "#d7b5a6"],
  ["Tapioca", 1820.7, 1892, 630.3, 19, "#776e6b"],
  ["Khesari", 1821, 1882.7, 661, 18.5, "#549a4a"],
  ["Small millets", 651.5, 856, 707, 33, "#f1ce63"],
  ["Moth", 894, 932, 687.3, 16, "#d45053"],
  ["Sweet potato", 952, 1141.5, 703, 28.5, "#ff9d9a"],
  ["Urad", 1213, 1316, 709, 48, "#fabfd2"],
  ["Bajra", 1323.7, 1409, 714, 36.5, "#ffbe7d"],
  ["Guar seed", 1480.7, 1573, 693.3, 19, "#4b74a0"],
  ["other oilseeds", 1429.5, 1536, 717.3, 16.8, "#a87499"],
  ["Gram", 1577, 1675, 712.5, 39, "#9d7660"],
  ["Wheat", 1682.6, 1811, 714, 42, "#b07aa1"],
  ["Coriander", 783, 919.5, 750, 29, "#ff9d9a"],
  ["Linseed", 926, 1037, 751, 30.5, "#8cd17d"],
  ["Onion", 1068, 1179.6, 757.5, 40, "#bab0ac"],
  ["Ginger", 1187, 1273, 756, 27, "#d4a6c8"],
  ["Other Summer Pulses", 1278.6, 1399.6, 744.3, 12.3, "#b08469"],
  ["Oilseeds total", 1578, 1655.5, 739.3, 12, "#8a817e"],
  ["Cowpea(Lobia)", 1669.500, 1794.6, 746.3, 18.5, "#b5aca8"]
];

const cloud = document.getElementById("cloud");
const pen = document.createElement("canvas").getContext("2d");
for (const [label, left, right, baseline, size, colour] of words) {
  pen.font = `300 ${size}px "Noto Sans", sans-serif`;
  const m = pen.measureText(label);
  const stretch = (right - left) / (m.actualBoundingBoxRight + m.actualBoundingBoxLeft);
  const text = document.createElementNS("http://www.w3.org/2000/svg", "text");
  text.textContent = label;
  text.setAttribute("font-size", size);
  text.setAttribute("fill", colour);
  text.setAttribute("transform", `translate(${left + m.actualBoundingBoxLeft * stretch} ${baseline}) scale(${stretch} 1)`);
  cloud.append(text);
}
```
